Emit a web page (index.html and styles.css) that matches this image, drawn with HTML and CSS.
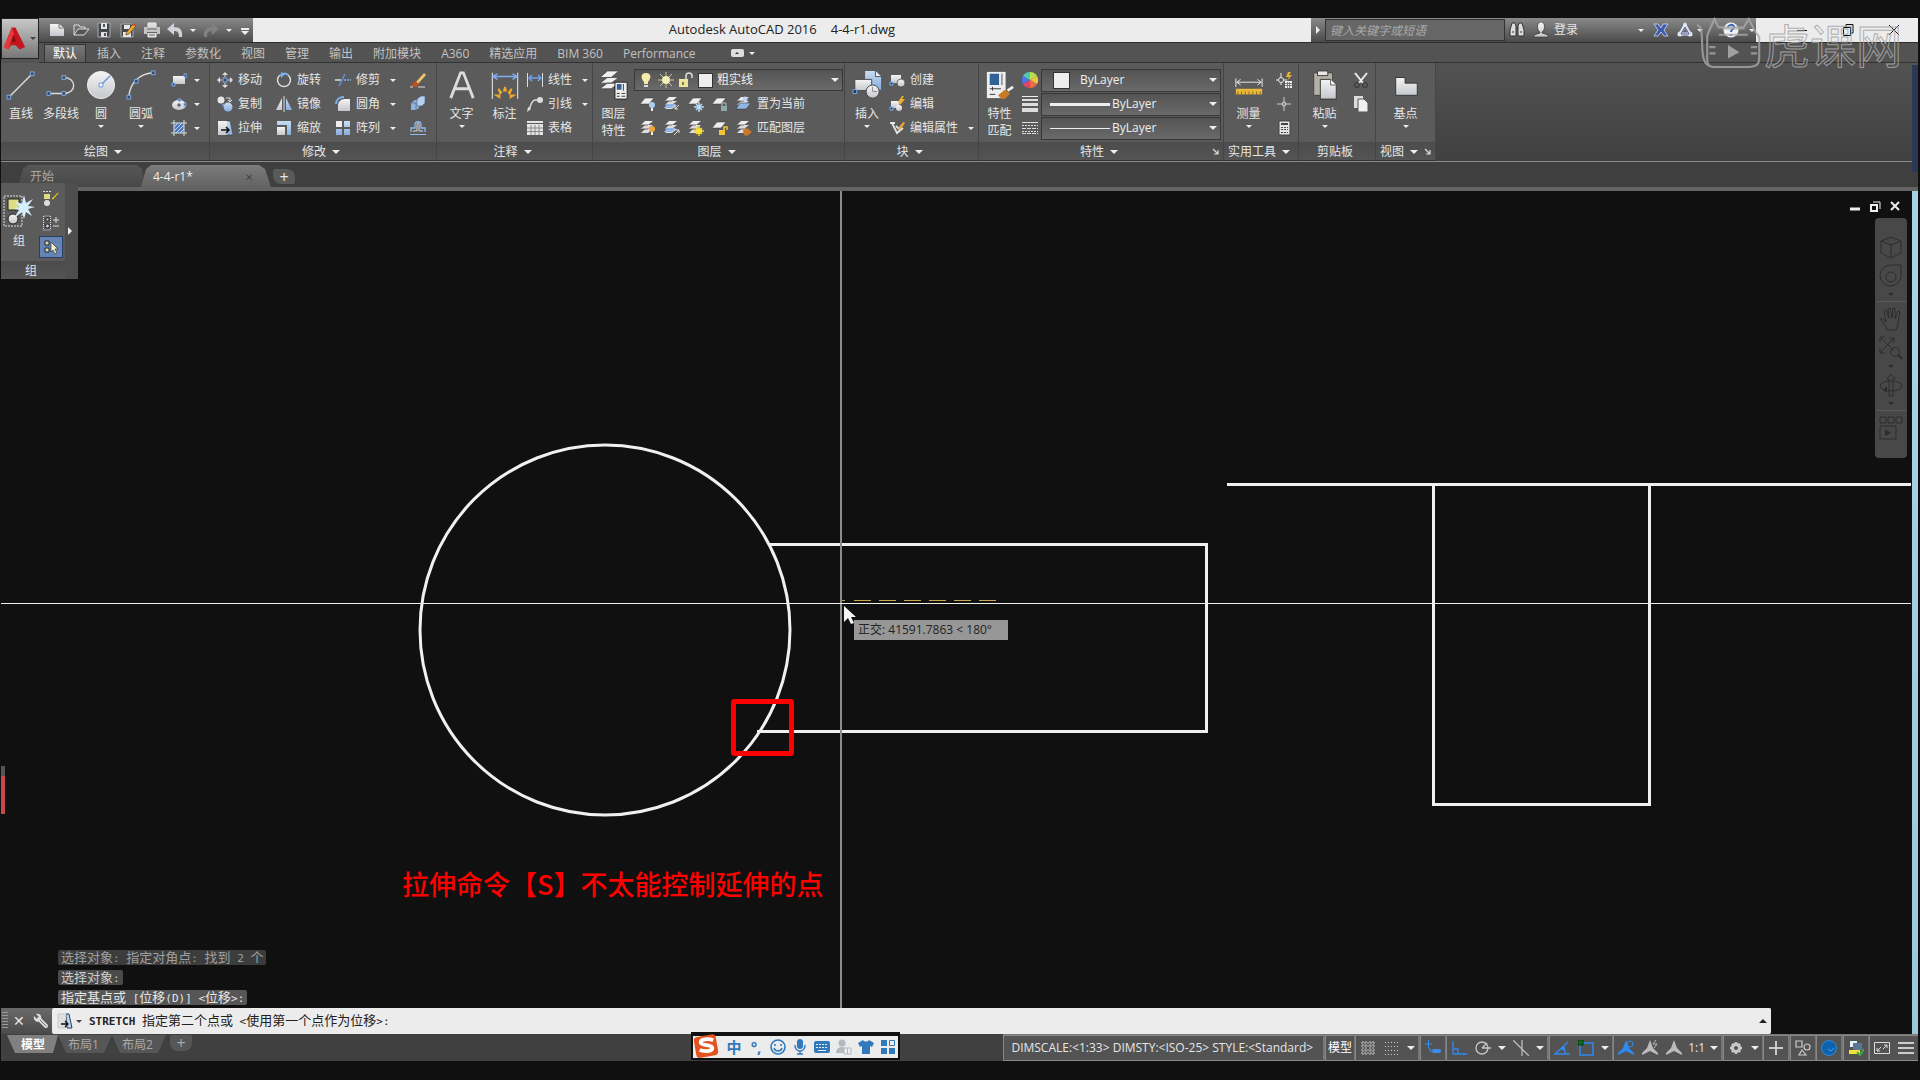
FILE: index.html
```html
<!DOCTYPE html>
<html lang="zh-CN">
<head>
    <meta charset="UTF-8">
    <meta name="viewport" content="width=device-width, initial-scale=1.0">
    <title>Autodesk AutoCAD 2016 4-4-r1.dwg</title>
    <link rel="stylesheet" href="styles.css">
</head>
<body>
    <!-- icon sprite -->
    <svg class="sprite" aria-hidden="true">
        <defs>
            <linearGradient id="metal" x1="0" y1="0" x2="0" y2="1"><stop offset="0" stop-color="#f4f4f4"/><stop offset="1" stop-color="#c4c7cc"/></linearGradient>
            <linearGradient id="sky" x1="0" y1="0" x2="0" y2="1"><stop offset="0" stop-color="#c9dcf2"/><stop offset="1" stop-color="#86aede"/></linearGradient>
        </defs>
        <!-- quick access -->
        <symbol id="i-logo" viewBox="0 0 26 28"><path d="M10 1h4l11 22-6 3-5-5H9l-3 5-5-3z" fill="#c4161c"/><path d="M10 1l3 8-5 10-2 7-5-3z" fill="#e5383b"/><path d="M12 9l3 8H9z" fill="#8a0f13"/></symbol>
        <symbol id="i-new" viewBox="0 0 16 16"><path d="M1 2h9l5 4v8H1z" fill="url(#metal)"/><path d="M10 2v4h5" fill="none" stroke="#777"/></symbol>
        <symbol id="i-open" viewBox="0 0 16 16"><path d="M1 13V3h5l1 2h5v3" fill="none" stroke="#ddd"/><path d="M1 13l4-6h11l-5 6z" fill="#555" stroke="#ddd"/></symbol>
        <symbol id="i-save" viewBox="0 0 16 16"><path d="M2 1h12v14H2z" fill="#44484d" stroke="#aaa"/><path d="M5 1h6v6H5zM5 10h6v5H5z" fill="#dfe2e6"/><path d="M8 2v3M9 11v3" stroke="#555" stroke-width="2"/></symbol>
        <symbol id="i-saveas" viewBox="0 0 16 16"><path d="M1 2h12v13H1z" fill="#44484d" stroke="#aaa"/><path d="M4 3h6v4H4zM3 10h8v5H3z" fill="#e4e6e8"/><path d="M6 11l7-9 3 2-7 8-3 1z" fill="#f0a92e" stroke="#333" stroke-width=".6"/><path d="M13 2l3 2" stroke="#d4462a" stroke-width="2"/></symbol>
        <symbol id="i-print" viewBox="0 0 16 16"><path d="M4 5V1h8v4M4 11v4h8v-4" fill="#ddd" stroke="#eee"/><path d="M0 5h16v7h-3v-2H3v2H0z" fill="#c4c4c4"/><path d="M3 7h10M5 13h6" stroke="#666"/></symbol>
        <symbol id="i-undo" viewBox="0 0 16 16"><path d="M0 7l7-6v4c6 0 9 3 8 10h-3c0-4-1-6-5-6v4z" fill="#cfd2d6"/></symbol>
        <symbol id="i-redo" viewBox="0 0 16 16"><path d="M16 7L9 1v4C3 5 0 8 1 15h3c0-4 1-6 5-6v4z" fill="#808080"/></symbol>
        <symbol id="i-find" viewBox="0 0 16 16"><path d="M3 1h3l1 3v10H1V8zM13 1h-3L9 4v10h6V8z" fill="#ddd" stroke="#333"/><path d="M3 10h2M11 10h2M7 6h2" stroke="#333"/></symbol>
        <symbol id="i-user" viewBox="0 0 16 16"><path d="M8 0c5 0 4 9 1 10v1l6 2v2H1v-2l6-2v-1C4 9 3 0 8 0z" fill="url(#metal)" stroke="#333" stroke-width=".7"/></symbol>
        <symbol id="i-exchange" viewBox="0 0 16 16"><path d="M1 2h4l3 4 2-4h5l-4 6 4 6h-4l-3-4-3 4H1l4-6z" fill="#3e5cae" stroke="#cdd8f4" stroke-width=".8"/></symbol>
        <symbol id="i-a360" viewBox="0 0 16 16"><path d="M8 3l5 9H3z" fill="none" stroke="#dfe5f2" stroke-width="3"/><circle cx="8" cy="3" r="2" fill="#dfe5f2"/><circle cx="3" cy="12" r="2.500" fill="#dfe5f2"/><circle cx="13" cy="12" r="2.500" fill="#dfe5f2"/><path d="M8 5l4 7H4z" fill="none" stroke="#4f608c"/></symbol>
        <symbol id="i-help" viewBox="0 0 16 16"><circle cx="8" cy="8" r="7.500" fill="#f0f3f8"/><path d="M5 6c0-4 6-4 6-1 0 2-3 2-3 5M8 12v2" fill="none" stroke="#3b62b5" stroke-width="2"/></symbol>
        <!-- draw -->
        <symbol id="i-line" viewBox="0 0 32 32"><path d="M3 29L28 4" stroke="#ddd" stroke-width="1.500"/><path d="M1 27h4v4H1zM26 2h4v4h-4z" fill="#3b4b66" stroke="#7fb0f0"/></symbol>
        <symbol id="i-pline" viewBox="0 0 32 32"><path d="M3 25h16c14 0 14-17 0-17" fill="none" stroke="#ddd" stroke-width="1.500"/><path d="M1 23h4v4H1zM17 23h4v4h-4zM17 6h4v4h-4z" fill="#3b4b66" stroke="#7fb0f0"/></symbol>
        <symbol id="i-circle" viewBox="0 0 32 32"><circle cx="16" cy="16" r="14.500" fill="url(#metal)" stroke="#eee"/><path d="M16 16L26 6" stroke="#5e92dc" stroke-width="1.500"/><path d="M14 14h4v4h-4z" fill="#fff" stroke="#5e92dc"/></symbol>
        <symbol id="i-arc" viewBox="0 0 32 32"><path d="M3 29C4 14 14 4 29 3" fill="none" stroke="#ddd" stroke-width="1.500"/><path d="M1 27h4v4H1zM9 10h4v4H9zM27 1h4v4h-4z" fill="#3b4b66" stroke="#7fb0f0"/></symbol>
        <symbol id="i-rect" viewBox="0 0 16 16"><path d="M2 4h12v8H2z" fill="url(#metal)"/><path d="M1 11h3v3H1zM13 2h3v3h-3z" fill="#3b4b66" stroke="#7fb0f0"/></symbol>
        <symbol id="i-ellipse" viewBox="0 0 16 16"><ellipse cx="8" cy="9" rx="7" ry="5" fill="url(#metal)"/><path d="M6 9h4M8 7v4" stroke="#444"/><path d="M7 3h3v2H7zM13 7h2v3h-2z" fill="#3b4b66" stroke="#7fb0f0"/></symbol>
        <symbol id="i-hatch" viewBox="0 0 16 16"><path d="M3 3h10v10H3z" fill="#4c78be"/><path d="M3 7l4-4M3 11l8-8M5 13l8-8M9 13l4-4" stroke="#c6d9f5"/><path d="M3 0v16M13 0v16M0 3h16M0 13h16" stroke="#ddd"/></symbol>
        <!-- modify -->
        <symbol id="i-move" viewBox="0 0 16 16"><path d="M8 0l3 3H5zM8 16l3-3H5zM0 8l3-3v6zM16 8l-3-3v6z" fill="#ddd"/><path d="M8 3v2M8 11v2M3 8h2M11 8h2" stroke="#ddd"/><path d="M6 6h4v4H6z" fill="#3b4b66" stroke="#7fb0f0"/></symbol>
        <symbol id="i-rotate" viewBox="0 0 16 16"><path d="M4 3a6.500 6.500 0 1 0 8 0" fill="none" stroke="#ddd" stroke-width="1.500"/><path d="M4 4c2-3 6-3 8-1" fill="none" stroke="#7fb0f0" stroke-width="2"/><path d="M5 0v6L9 2z" fill="#7fb0f0"/></symbol>
        <symbol id="i-trim" viewBox="0 0 16 16"><path d="M0 8h6" stroke="#ddd" stroke-width="1.500"/><path d="M4 14L10 2" stroke="#5e92dc" stroke-width="1.500"/><path d="M9 8h7" stroke="#7fb0f0" stroke-width="1.500" stroke-dasharray="2 1"/></symbol>
        <symbol id="i-erase" viewBox="0 0 16 16"><path d="M6 10L14 1l2 2-8 9z" fill="#f1c465"/><path d="M5 9l4 3-3 3-5-1z" fill="#c4501e"/><path d="M0 15h3M8 15h7" stroke="#ddd"/></symbol>
        <symbol id="i-copy" viewBox="0 0 16 16"><circle cx="4" cy="4" r="3.500" fill="#e6e6e6"/><circle cx="11" cy="11" r="4.500" fill="url(#sky)"/><circle cx="6" cy="9" r="1" fill="#7fb0f0"/><path d="M9 2h4v3M11 4l2 2 2-2" fill="none" stroke="#ddd"/></symbol>
        <symbol id="i-mirror" viewBox="0 0 16 16"><path d="M6 2v12H0z" fill="url(#metal)"/><path d="M10 2v12h6z" fill="url(#sky)"/><path d="M8 0v16" stroke="#ddd"/></symbol>
        <symbol id="i-fillet" viewBox="0 0 16 16"><path d="M3 15V9c0-3 3-6 7-6h5v12z" fill="url(#metal)"/><path d="M1 8c0-4 3-7 8-7" fill="none" stroke="#7fb0f0" stroke-width="2"/></symbol>
        <symbol id="i-explode" viewBox="0 0 16 16"><path d="M1 7l4-3h4v8l-3 2H1z" fill="#8fb3dc"/><path d="M7 3l4-3h4v7l-3 3H7z" fill="#b6cfec" stroke="#48607f" stroke-width=".6"/><path d="M1 7h5v7" fill="none" stroke="#48607f" stroke-width=".6"/></symbol>
        <symbol id="i-stretch" viewBox="0 0 16 16"><path d="M9 1h4l3 14H9z" fill="url(#sky)" stroke="#333" stroke-width=".5"/><path d="M1 1h9v14H1z" fill="url(#metal)"/><path d="M4 10h7M9 7l3 3-3 3" fill="none" stroke="#111" stroke-width="1.500"/></symbol>
        <symbol id="i-scale" viewBox="0 0 16 16"><path d="M1 1h14v14h-4V5H1z" fill="url(#sky)"/><path d="M1 7h8v8H1z" fill="url(#metal)"/></symbol>
        <symbol id="i-array" viewBox="0 0 16 16"><path d="M1 1h6v6H1z" fill="#eee"/><path d="M9 1h6v6H9zM1 9h6v6H1zM9 9h6v6H9z" fill="url(#sky)"/></symbol>
        <symbol id="i-offset" viewBox="0 0 16 16"><path d="M0 14.500h16" stroke="#8fbaf2"/><path d="M1 12V8h4V4c0-3 6-3 6 0v4h4v4" fill="none" stroke="#8fbaf2" stroke-width="1.300"/><path d="M3 11h4V4c0-1 2-1 2 0v7h4" fill="none" stroke="#ddd"/></symbol>
        <!-- annotate -->
        <symbol id="i-text" viewBox="0 0 32 32"><path d="M4 30L14.500 3h3L28 30M8 20h16" fill="none" stroke="#dcdcdc" stroke-width="3"/></symbol>
        <symbol id="i-dim" viewBox="0 0 32 32"><path d="M2.500 3v28M29.500 3v28" stroke="#ddd" stroke-width="1.200"/><path d="M4 7h24M8 4L3 7l5 3M24 4l5 3-5 3" fill="none" stroke="#7fb0f0" stroke-width="1.500"/><path d="M16 18l1 4h-2zM9 20l3 4-1 1zM23 20l-3 4 1 1zM7 27h3v2zM25 27h-3v2z" stroke="#f0a92e" stroke-width="2" fill="#f0a92e"/></symbol>
        <symbol id="i-linear" viewBox="0 0 16 16"><path d="M.5 1v14M15.500 1v14" stroke="#ddd"/><path d="M2 6h12M5 3L2 6l3 3M11 3l3 3-3 3" fill="none" stroke="#6ea2ec" stroke-width="1.500"/></symbol>
        <symbol id="i-leader" viewBox="0 0 16 16"><path d="M2 14C4 9 4 5 8 4h4" fill="none" stroke="#ddd" stroke-width="1.500"/><circle cx="13" cy="4" r="3" fill="#ddd"/><path d="M0 16l1-5 3 2z" fill="#ddd"/></symbol>
        <symbol id="i-table" viewBox="0 0 16 16"><path d="M0 1h16v14H0z" fill="#e4e4e4"/><path d="M0 3.500h16" stroke="#555"/><path d="M0 8h16M0 11.500h16M4 5v10M8 5v10M12 5v10" stroke="#888"/></symbol>
        <!-- layers -->
        <symbol id="i-layerprops" viewBox="0 0 32 32"><path d="M9 1h12l-8 7H1zM9 8h12l-8 6H1zM9 14h12l-8 6H1z" fill="#efefef" stroke="#444" stroke-width=".8"/><path d="M17 13h13v18H17z" fill="#eee" stroke="#222"/><path d="M19 15h5v6h-5z" fill="#2d5c9c"/><path d="M19 25h3M19 28h3M24 25h4M24 28h4M26 15v7" stroke="#333"/></symbol>
        <symbol id="i-bulb" viewBox="0 0 16 16"><path d="M8 1c6 0 5 6 2 9v2H6v-2C3 7 2 1 8 1z" fill="#f6ebaa"/><path d="M6 13h4v2H6z" fill="#ddd"/></symbol>
        <symbol id="i-sun" viewBox="0 0 16 16"><path d="M8 0v16M0 8h16M2 2l12 12M14 2L2 14" stroke="#c9c5a8"/><circle cx="8" cy="8" r="4" fill="#f5eeb5"/></symbol>
        <symbol id="i-unlock" viewBox="0 0 16 16"><path d="M1 7h9v8H1z" fill="#efe59a"/><path d="M8 7V4c0-4 6-4 6 0v2" fill="none" stroke="#ddd" stroke-width="1.500"/><path d="M5 10v3" stroke="#555" stroke-width="1.500"/></symbol>
        <symbol id="i-sheet" viewBox="0 0 16 16"><path d="M5 2h9L9 8H0z" fill="#eee" stroke="#333" stroke-width=".5"/></symbol>
        <symbol id="i-stack" viewBox="0 0 16 16"><path d="M5 1h8L8 5H1z" fill="#eee"/><path d="M5 5h8L8 9H1z" fill="#ddd"/><path d="M5 9h8l-5 4H1z" fill="#ddd"/><path d="M2 5h6M2 9h6" stroke="#333" stroke-width=".7"/></symbol>
        <symbol id="i-lay1" viewBox="0 0 16 16"><use href="#i-sheet"/><circle cx="12" cy="9" r="3" fill="#a8d0f4"/><path d="M12 12v3" stroke="#eee" stroke-width="2"/></symbol>
        <symbol id="i-lay2" viewBox="0 0 16 16"><use href="#i-stack"/><path d="M3 8h9l-4 4H0z" fill="#8fb6e6"/><path d="M15 9l-4 4v-3M11 13h3" fill="none" stroke="#ddd"/></symbol>
        <symbol id="i-lay3" viewBox="0 0 16 16"><use href="#i-sheet"/><path d="M11 6v10M6 11h10M8 8l6 6M14 8l-6 6" stroke="#b9dcfa" stroke-width="1.500"/></symbol>
        <symbol id="i-lay4" viewBox="0 0 16 16"><use href="#i-sheet"/><path d="M9 10h6v5H9z" fill="#8fa9a9"/><path d="M10 10V7h4v3" fill="none" stroke="#a9c4c4"/></symbol>
        <symbol id="i-lay5" viewBox="0 0 16 16"><use href="#i-stack"/><path d="M4 7h11l-5 6H0z" fill="#8fb6e6" stroke="#333" stroke-width=".5"/><circle cx="9" cy="3" r="2.500" fill="#bcd6f2"/></symbol>
        <symbol id="i-lay6" viewBox="0 0 16 16"><use href="#i-stack"/><circle cx="12" cy="9" r="3" fill="#f5a63a"/><path d="M12 12v3" stroke="#eee" stroke-width="2"/></symbol>
        <symbol id="i-lay7" viewBox="0 0 16 16"><use href="#i-stack"/><path d="M3 8h9l-4 4H0z" fill="#8fb6e6"/><path d="M10 15l5-5M12 10h3v3" fill="none" stroke="#ddd"/></symbol>
        <symbol id="i-lay8" viewBox="0 0 16 16"><use href="#i-stack"/><path d="M11 6v10M6 11h10M8 8l6 6M14 8l-6 6" stroke="#f7d23a" stroke-width="1.500"/><circle cx="11" cy="11" r="3" fill="#f7e13a"/></symbol>
        <symbol id="i-lay9" viewBox="0 0 16 16"><use href="#i-sheet"/><path d="M7 10h6v5H7z" fill="#f1c53a"/><path d="M12 10V7h3v3" fill="none" stroke="#f1c53a" stroke-width="1.500"/></symbol>
        <symbol id="i-lay10" viewBox="0 0 16 16"><use href="#i-stack"/><path d="M7 10l4-2 5 4-5 4-3-1z" fill="#c9772b"/></symbol>
        <!-- block -->
        <symbol id="i-insert" viewBox="0 0 32 32"><path d="M14 1h11l6 6v14H14z" fill="url(#sky)"/><path d="M25 1v6h6" fill="#eef" stroke="#456"/><path d="M3 10h18v12H3z" fill="url(#metal)" stroke="#444"/><circle cx="22" cy="23" r="7" fill="url(#metal)" stroke="#444"/><path d="M22 18v5h5" stroke="#888" fill="none"/><path d="M1 21h4v4H1z" fill="#234" stroke="#7fb0f0"/></symbol>
        <symbol id="i-create" viewBox="0 0 16 16"><path d="M2 3h10v8H2z" fill="url(#metal)"/><circle cx="12" cy="11" r="4" fill="url(#metal)" stroke="#444" stroke-width=".7"/><path d="M1 10h3v3H1z" fill="#345" stroke="#7fb0f0"/></symbol>
        <symbol id="i-bedit" viewBox="0 0 16 16"><path d="M2 5h8v7H2z" fill="url(#metal)"/><circle cx="10" cy="12" r="3" fill="url(#metal)"/><path d="M9 6l4-6h2l-2 3h3l-5 6z" fill="#f0b132"/><path d="M1 11h3v3H1z" fill="#345" stroke="#7fb0f0"/></symbol>
        <symbol id="i-attr" viewBox="0 0 16 16"><path d="M1 3h5M3 3l5 10 6-5M7 6l3 3 3-4" fill="none" stroke="#e4e4e4" stroke-width="1.800"/><path d="M9 9l5-7 2 1-5 7z" fill="#f0a92e"/></symbol>
        <!-- properties -->
        <symbol id="i-match" viewBox="0 0 32 32"><path d="M2 2h20v28H2z" fill="#eceef0"/><path d="M5 4h10v12H5z" fill="#2f6296"/><path d="M18 4v12" stroke="#999" stroke-width="2"/><path d="M5 20h12M8 18v4M5 26h6" stroke="#333"/><path d="M14 27l7-6 6 4-6 6c-3 0-5-1-7-4z" fill="#c97a22"/><path d="M24 22l6-4" stroke="#eee" stroke-width="3"/></symbol>
        <symbol id="i-wheel" viewBox="0 0 16 16"><path d="M8 8V0a8 8 0 0 1 7 4z" fill="#b8e04a"/><path d="M8 8l7-4a8 8 0 0 1 0 8z" fill="#f0c63a"/><path d="M8 8l7 4a8 8 0 0 1-7 4z" fill="#ef6a4a"/><path d="M8 8v8a8 8 0 0 1-7-4z" fill="#e04468"/><path d="M8 8l-7 4a8 8 0 0 1 0-8z" fill="#4a78e0"/><path d="M8 8L1 4a8 8 0 0 1 7-4z" fill="#54c8b0"/></symbol>
        <symbol id="i-weight" viewBox="0 0 16 16"><path d="M0 .5h16" stroke="#eee"/><path d="M0 4h16" stroke="#ddd" stroke-width="2"/><path d="M0 8.500h16" stroke="#ddd" stroke-width="3"/><path d="M0 14h16" stroke="#ddd" stroke-width="4"/></symbol>
        <symbol id="i-dash" viewBox="0 0 16 16"><path d="M0 2.500h16" stroke="#ddd"/><path d="M0 5.500h16M0 11.500h16" stroke="#ddd" stroke-dasharray="2 1"/><path d="M0 8.500h16M0 13.500h16" stroke="#ddd" stroke-dasharray="4 1"/></symbol>
        <!-- utilities, clipboard, view -->
        <symbol id="i-measure" viewBox="0 0 32 32"><path d="M2 9v9M30 9v9M3 13h26M7 10l-4 3 4 3M25 10l4 3-4 3" fill="none" stroke="#eee"/><path d="M2 20h28v6H2z" fill="#e8b83a"/><path d="M4 23v3M8 23v3M12 23v3M16 23v3M20 23v3M24 23v3M28 23v3" stroke="#8a661a"/></symbol>
        <symbol id="i-select" viewBox="0 0 16 16"><path d="M5 1v12M0 8h11" stroke="#eee"/><circle cx="5" cy="8" r="2.500" fill="#555" stroke="#eee"/><path d="M12 0l-2 5h3l-2 4 5-6h-3l2-3z" fill="#f0b132"/><path d="M9 9h7v7H9z" fill="#eee"/><path d="M9 11.500h7M9 13.500h7M11.500 10v6M13.500 10v6" stroke="#555" stroke-width=".7"/></symbol>
        <symbol id="i-point" viewBox="0 0 16 16"><path d="M8 1v14M1 8h14" stroke="#ccc"/><circle cx="8" cy="8" r="2" fill="#888" stroke="#ccc"/></symbol>
        <symbol id="i-calc" viewBox="0 0 16 16"><path d="M3 1h11v14H3z" fill="#e4e4e4" stroke="#444"/><path d="M5 3h7v2H5zM5 7h2v1H5zM8 7h2v1H8zM11 7h1v1h-1zM5 9h2v1H5zM8 9h2v1H8zM11 9h1v1h-1zM5 12h2v1H5zM8 12h2v1H8zM11 12h1v1h-1z" fill="#444"/></symbol>
        <symbol id="i-paste" viewBox="0 0 32 32"><path d="M4 3h20v24H4z" fill="#b5b1a4" stroke="#444"/><path d="M8 1h11v5H8z" fill="#e8e8e8" stroke="#333"/><path d="M11 10h11l6 6v15H11z" fill="url(#metal)" stroke="#333"/><path d="M22 10v6h6" fill="#fff" stroke="#555"/></symbol>
        <symbol id="i-cut" viewBox="0 0 16 16"><path d="M2 1l8 10M14 1L6 11" stroke="#eee" stroke-width="2"/><circle cx="4" cy="13" r="2.500" fill="none" stroke="#333"/><circle cx="12" cy="13" r="2.500" fill="none" stroke="#333"/></symbol>
        <symbol id="i-clip" viewBox="0 0 16 16"><path d="M1 0h9v12H1z" fill="#ddd"/><path d="M5 3h6l4 4v9H5z" fill="#f0f0f0" stroke="#555"/></symbol>
        <symbol id="i-base" viewBox="0 0 32 32"><path d="M5 8h10v6h13v13H5z" fill="url(#metal)" stroke="#333"/></symbol>
        <symbol id="i-launch" viewBox="0 0 8 8"><path d="M1 1l5 5M6 2v4H2" fill="none" stroke="#ddd" stroke-width="1.200"/></symbol>
        <!-- group palette -->
        <symbol id="i-group" viewBox="0 0 32 32"><path d="M1 1h18v30H1z" fill="none" stroke="#ddd" stroke-dasharray="2 1"/><path d="M5 4h11v11H5z" fill="#dfdc82" stroke="#222"/><circle cx="10" cy="24" r="5" fill="url(#metal)" stroke="#222"/><path d="M21 0l2 8 7-4-5 7 7 1-7 2 4 7-6-4-2 7-2-7-8 6 5-8-6-2 6-1-4-6 7 3z" fill="#d5effc"/></symbol>
        <symbol id="i-ungroup" viewBox="0 0 16 16"><path d="M1 3h6v5H1z" fill="#dfdc82"/><circle cx="4" cy="12" r="3" fill="#ddd"/><path d="M0 .5h8" stroke="#ddd" stroke-dasharray="2 1"/><path d="M8 8l7-7 1 1-6 7z" fill="#d9c234" stroke="#333" stroke-width=".4"/></symbol>
        <symbol id="i-gedit" viewBox="0 0 16 16"><path d="M.5 1v14h7V1z" fill="none" stroke="#ddd" stroke-dasharray="1 1"/><path d="M3 3h3v3H3z" fill="#ddd" stroke="#222"/><circle cx="4.500" cy="11" r="2" fill="#b9d6f8" stroke="#222"/><path d="M10 5h6M13 2v6M10 11h6" stroke="#ddd"/></symbol>
        <symbol id="i-gsel" viewBox="0 0 16 16"><path d="M2 2h4v4H2zM2 9h4v4H2z" fill="#dfdc9a" stroke="#223"/><path d="M8 3v10l2-2 2 4 2-1-2-4h3z" fill="#f2efb8" stroke="#223" stroke-width=".6"/></symbol>
        <!-- navigation bar -->
        <symbol id="i-cube" viewBox="0 0 24 24"><path d="M2 6l10-4 10 4v12l-10 5-10-5zM2 6l10 4 10-4M12 10v13" fill="none" stroke="#2c2c2c"/></symbol>
        <symbol id="i-steer" viewBox="0 0 24 24"><path d="M12 1h10v11a10.500 10.500 0 1 1-10-11z" fill="none" stroke="#2c2c2c"/><circle cx="12" cy="13" r="5" fill="none" stroke="#2c2c2c"/></symbol>
        <symbol id="i-pan" viewBox="0 0 24 24"><path d="M8 23c0-4-5-8-7-11 2-1 3 0 6 3L5 4l2-1 3 8-1-9 2-1 2 10 1-10h2l0 11 3-8 2 1c-2 6-1 13-4 18z" fill="none" stroke="#2c2c2c"/></symbol>
        <symbol id="i-zoom" viewBox="0 0 24 24"><path d="M1 17L15 2M10 2h5v5M1 1l14 14M1 6V1h5M1 12v5h5" fill="none" stroke="#2c2c2c"/><circle cx="16" cy="16" r="4.500" fill="none" stroke="#2c2c2c"/><path d="M19 19l4 4" stroke="#2c2c2c" stroke-width="2"/></symbol>
        <symbol id="i-orbit" viewBox="0 0 24 24"><path d="M10 23V6H8l4-5 4 5h-2v17z" fill="none" stroke="#2c2c2c"/><ellipse cx="12" cy="13" rx="11" ry="5" fill="none" stroke="#2c2c2c"/><path d="M8 13v7l-4-3z" fill="#2c2c2c"/></symbol>
        <symbol id="i-motion" viewBox="0 0 24 24"><path d="M1 1h6v6H1zM9 1h6v6H9zM17 1h6v6h-6zM1 10h16v13H1z" fill="none" stroke="#2c2c2c"/><path d="M6 13v7l6-3z" fill="#2c2c2c"/></symbol>
        <!-- command line -->
        <symbol id="i-wrench" viewBox="0 0 16 16"><path d="M6 6l7 7" stroke="#ddd" stroke-width="4" stroke-linecap="round"/><path d="M6 6l7 7" stroke="#666" stroke-linecap="round"/><path d="M1 3l3 3 2-2-3-3c4-1 6 2 5 5L5 9C2 9 0 6 1 3z" fill="#ddd"/></symbol>
        <symbol id="i-cmd" viewBox="0 0 16 16"><path d="M9 1h3l3 14h-5z" fill="#b7d3f2" stroke="#2c3d52"/><path d="M1 1h8v14H1z" fill="#dcdfe2" stroke="#bbb" stroke-width=".6"/><path d="M4 11h6M8 8l3 3-3 3" fill="none" stroke="#111" stroke-width="1.300"/></symbol>
        <!-- status bar -->
        <symbol id="s-grid" viewBox="0 0 16 16"><path d="M3 1v14M6 1v14M10 1v14M13 1v14M1 3h14M1 6h14M1 10h14M1 13h14" stroke="#c4c4c4" stroke-dasharray="2 1"/></symbol>
        <symbol id="s-snap" viewBox="0 0 16 16"><path d="M1 2.500h14M1 6.500h14M1 10.500h14M1 14.500h14" stroke="#ccc" stroke-dasharray="1 2"/></symbol>
        <symbol id="s-infer" viewBox="0 0 16 16"><path d="M0 4h7M3.500 0v8M5 8v3h3" fill="none" stroke="#3b8ee8"/><rect x="7" y="9" width="9" height="4" rx="2" fill="#3b8ee8"/></symbol>
        <symbol id="s-ortho" viewBox="0 0 16 16"><path d="M2 1v13h14M2 9h5v5" fill="none" stroke="#2f8af0" stroke-width="1.300"/></symbol>
        <symbol id="s-polar" viewBox="0 0 16 16"><circle cx="7" cy="8" r="6" fill="none" stroke="#c6c6c6" stroke-width="1.300"/><path d="M7 8h9M7 8l5-5" stroke="#c6c6c6" stroke-width="1.300"/></symbol>
        <symbol id="s-iso" viewBox="0 0 16 16"><path d="M0 0l16 16M9 0v16" stroke="#bbb" stroke-width="1.300"/></symbol>
        <symbol id="s-track" viewBox="0 0 16 16"><path d="M14 2L1 14h15M9 7l3 7" fill="none" stroke="#2f8af0" stroke-width="1.300"/><path d="M7 7h4v3H7z" fill="#2f8af0"/></symbol>
        <symbol id="s-osnap" viewBox="0 0 16 16"><path d="M2 3h13v12H2z" fill="none" stroke="#2f8af0" stroke-width="1.500"/><path d="M0 0h5v5H0z" fill="#0c6b1c" stroke="#043a0c"/></symbol>
        <symbol id="s-person" viewBox="0 0 16 16"><path d="M8 0l3 8 5 5v2l-8-4-8 4v-2l5-5z" fill="currentColor"/></symbol>
        <symbol id="s-ann" viewBox="0 0 16 16"><use href="#s-person"/><circle cx="12" cy="4" r="3" fill="none" stroke="currentColor"/></symbol>
        <symbol id="s-auto" viewBox="0 0 16 16"><use href="#s-person"/><path d="M14 0l-3 4h4l-3 4" fill="none" stroke="currentColor"/></symbol>
        <symbol id="s-gear" viewBox="0 0 16 16"><circle cx="8" cy="8" r="3.500" fill="none" stroke="#c8c8c8" stroke-width="3"/><path d="M8 2v3M8 11v3M2 8h3M11 8h3M4 4l2 2M10 10l2 2M12 4l-2 2M6 10l-2 2" stroke="#c8c8c8" stroke-width="2.500"/></symbol>
        <symbol id="s-plus" viewBox="0 0 16 16"><path d="M8 1v14M1 8h14" stroke="#ccc" stroke-width="2"/></symbol>
        <symbol id="s-shapes" viewBox="0 0 16 16"><path d="M1 1h6v6H1zM7 10l4 5H4z" fill="none" stroke="#ccc" stroke-width="1.200"/><circle cx="12" cy="7" r="3" fill="none" stroke="#ccc" stroke-width="1.200"/></symbol>
        <symbol id="s-hw" viewBox="0 0 16 16"><circle cx="8" cy="8" r="7.500" fill="#0f62ae" stroke="#2f86d8"/><path d="M7 9l3 2 3-3" fill="none" stroke="#4aa0ee"/></symbol>
        <symbol id="s-clean" viewBox="0 0 16 16"><path d="M2 1h7v6H2z" fill="#e8f2fa"/><path d="M5 3h9v7H5z" fill="#5a7894"/><path d="M1 10h11v4H1z" fill="#f0e23a"/><path d="M9 12l3 3 4-6" fill="none" stroke="#3fae3a" stroke-width="2"/></symbol>
        <symbol id="s-full" viewBox="0 0 16 16"><path d="M.5 2.500h15v11H.5z" fill="none" stroke="#ddd"/><path d="M3 11l4-4M3 8v3h3M13 5L9 9M10 5h3v3" fill="none" stroke="#ddd"/></symbol>
        <symbol id="s-menu" viewBox="0 0 16 16"><path d="M0 3h16M0 8h16M0 13h16" stroke="#ccc" stroke-width="2"/></symbol>
        <!-- input method bar -->
        <symbol id="m-logo" viewBox="0 0 28 26"><rect x="2" y="2" width="23" height="22" rx="4" fill="#e2531f" transform="rotate(-10 14 13)"/><path d="M21 7c-5-2-13-1-13 2 0 4 12 2 12 6 0 4-9 4-13 2" fill="none" stroke="#fff" stroke-width="4"/></symbol>
        <symbol id="m-smile" viewBox="0 0 16 16"><circle cx="8" cy="8" r="7" fill="none" stroke="#3079bd" stroke-width="1.600"/><path d="M5 5v2M11 5v2M4 9c1 4 7 4 8 0" fill="none" stroke="#3079bd" stroke-width="1.500"/></symbol>
        <symbol id="m-mic" viewBox="0 0 16 16"><rect x="5" y="0" width="6" height="10" rx="3" fill="#3079bd"/><path d="M3 6c0 8 10 8 10 0M8 12v3M5 15h6" fill="none" stroke="#3079bd" stroke-width="1.500"/></symbol>
        <symbol id="m-keys" viewBox="0 0 16 16"><rect y="2" width="16" height="12" rx="2" fill="#3079bd"/><path d="M2 5.500h12M2 8.500h12" stroke="#eee" stroke-dasharray="2 1"/><path d="M4 11.500h8" stroke="#eee"/></symbol>
        <symbol id="m-user" viewBox="0 0 16 16"><circle cx="6" cy="4" r="3.500" fill="#b4b8bf"/><path d="M0 14c0-7 9-7 10-4v4z" fill="#b4b8bf"/><path d="M8 9h7v6H8z" fill="#ececec" stroke="#b4b8bf"/><path d="M11.500 9v6" stroke="#b4b8bf"/></symbol>
        <symbol id="m-shirt" viewBox="0 0 16 16"><path d="M5 1c1 2 5 2 6 0l5 3-2 4-2-1v8H4V7L2 8 0 4z" fill="#3079bd"/></symbol>
        <symbol id="m-apps" viewBox="0 0 16 16"><path d="M1 1h6v6H1zM1 9h6v6H1zM9 9h6v6H9z" fill="#3079bd"/><path d="M9.500 1.500h5v5h-5z" fill="none" stroke="#3079bd"/></symbol>
    </svg>

    <div class="app">
        <header class="header">
            <button class="app-button" aria-label="应用程序菜单"><svg class="logo"><use href="#i-logo"/></svg><i class="caret caret-dark"></i></button>
            <div class="titlebar">
                <div class="quick-access">
                    <button aria-label="新建"><svg><use href="#i-new"/></svg></button>
                    <button aria-label="打开"><svg><use href="#i-open"/></svg></button>
                    <button aria-label="保存"><svg><use href="#i-save"/></svg></button>
                    <button aria-label="另存为"><svg><use href="#i-saveas"/></svg></button>
                    <button aria-label="打印"><svg><use href="#i-print"/></svg></button>
                    <button aria-label="放弃"><svg><use href="#i-undo"/></svg></button>
                    <i class="caret"></i>
                    <button aria-label="重做"><svg><use href="#i-redo"/></svg></button>
                    <i class="caret"></i>
                    <button class="customize" aria-label="自定义"><i class="caret caret-big"></i></button>
                </div>
                <h1 class="window-title"><span>Autodesk AutoCAD 2016</span><span>4-4-r1.dwg</span></h1>
                <div class="info-center">
                    <button class="info-toggle" aria-label="收起"><i class="caret-right"></i></button>
                    <input type="text" class="search" placeholder="键入关键字或短语" aria-label="搜索">
                    <button aria-label="搜索"><svg><use href="#i-find"/></svg></button>
                    <button class="login"><svg><use href="#i-user"/></svg>登录<i class="caret"></i></button>
                    <button aria-label="Exchange"><svg><use href="#i-exchange"/></svg></button>
                    <button aria-label="A360"><svg><use href="#i-a360"/></svg></button>
                    <i class="caret"></i>
                    <button class="help" aria-label="帮助"><svg><use href="#i-help"/></svg></button>
                    <i class="caret"></i>
                </div>
                <div class="window-buttons">
                    <button aria-label="最小化"><svg viewBox="0 0 12 12"><path d="M1 6.500h10" stroke="#111"/></svg></button>
                    <button aria-label="还原"><svg viewBox="0 0 12 12"><path d="M1.500 3.500h7v8h-7zM4 3V.5h7V9H9" fill="none" stroke="#111"/></svg></button>
                    <button aria-label="关闭"><svg viewBox="0 0 12 12"><path d="M1 1l10 10M11 1L1 11" stroke="#111"/></svg></button>
                </div>
            </div>
            <nav class="ribbon-tabs">
                <a href="#" class="active">默认</a>
                <a href="#">插入</a>
                <a href="#">注释</a>
                <a href="#">参数化</a>
                <a href="#">视图</a>
                <a href="#">管理</a>
                <a href="#">输出</a>
                <a href="#">附加模块</a>
                <a href="#">A360</a>
                <a href="#">精选应用</a>
                <a href="#">BIM 360</a>
                <a href="#">Performance</a>
                <button class="ribbon-min" aria-label="最小化功能区"><i class="min-box"></i><i class="caret"></i></button>
            </nav>
        </header>

        <section class="ribbon">
            <div class="panel panel-draw">
                <div class="panel-body">
                    <button class="big"><svg><use href="#i-line"/></svg>直线</button>
                    <button class="big"><svg><use href="#i-pline"/></svg>多段线</button>
                    <button class="big"><svg><use href="#i-circle"/></svg>圆<i class="caret"></i></button>
                    <button class="big"><svg><use href="#i-arc"/></svg>圆弧<i class="caret"></i></button>
                    <div class="small-col">
                        <button class="small" aria-label="矩形"><svg><use href="#i-rect"/></svg><i class="caret"></i></button>
                        <button class="small" aria-label="椭圆"><svg><use href="#i-ellipse"/></svg><i class="caret"></i></button>
                        <button class="small" aria-label="图案填充"><svg><use href="#i-hatch"/></svg><i class="caret"></i></button>
                    </div>
                </div>
                <div class="panel-title">绘图<i class="caret caret-big"></i></div>
            </div>

            <div class="panel panel-modify">
                <div class="panel-body modify-grid">
                    <button class="small"><svg><use href="#i-move"/></svg>移动</button>
                    <button class="small"><svg><use href="#i-rotate"/></svg>旋转</button>
                    <button class="small"><svg><use href="#i-trim"/></svg>修剪<i class="caret"></i></button>
                    <button class="small" aria-label="删除"><svg><use href="#i-erase"/></svg></button>
                    <button class="small"><svg><use href="#i-copy"/></svg>复制</button>
                    <button class="small"><svg><use href="#i-mirror"/></svg>镜像</button>
                    <button class="small"><svg><use href="#i-fillet"/></svg>圆角<i class="caret"></i></button>
                    <button class="small" aria-label="分解"><svg><use href="#i-explode"/></svg></button>
                    <button class="small"><svg><use href="#i-stretch"/></svg>拉伸</button>
                    <button class="small"><svg><use href="#i-scale"/></svg>缩放</button>
                    <button class="small"><svg><use href="#i-array"/></svg>阵列<i class="caret"></i></button>
                    <button class="small" aria-label="偏移"><svg><use href="#i-offset"/></svg></button>
                </div>
                <div class="panel-title">修改<i class="caret caret-big"></i></div>
            </div>

            <div class="panel panel-annotate">
                <div class="panel-body">
                    <button class="big"><svg><use href="#i-text"/></svg>文字<i class="caret"></i></button>
                    <button class="big"><svg><use href="#i-dim"/></svg>标注</button>
                    <div class="small-col">
                        <button class="small"><svg><use href="#i-linear"/></svg>线性<i class="caret"></i></button>
                        <button class="small"><svg><use href="#i-leader"/></svg>引线<i class="caret"></i></button>
                        <button class="small"><svg><use href="#i-table"/></svg>表格</button>
                    </div>
                </div>
                <div class="panel-title">注释<i class="caret caret-big"></i></div>
            </div>

            <div class="panel panel-layers">
                <div class="panel-body">
                    <button class="big"><svg><use href="#i-layerprops"/></svg>图层<br>特性</button>
                    <div class="layer-tools">
                        <div class="combo layer-combo">
                            <svg><use href="#i-bulb"/></svg><svg><use href="#i-sun"/></svg><svg><use href="#i-unlock"/></svg>
                            <i class="swatch"></i>
                            <select aria-label="图层"><option>粗实线</option></select>
                            <i class="caret caret-big"></i>
                        </div>
                        <div class="layer-row">
                            <button class="small" aria-label="关"><svg><use href="#i-lay1"/></svg></button>
                            <button class="small" aria-label="隔离"><svg><use href="#i-lay2"/></svg></button>
                            <button class="small" aria-label="冻结"><svg><use href="#i-lay3"/></svg></button>
                            <button class="small" aria-label="锁定"><svg><use href="#i-lay4"/></svg></button>
                            <button class="small"><svg><use href="#i-lay5"/></svg>置为当前</button>
                        </div>
                        <div class="layer-row">
                            <button class="small" aria-label="打开所有图层"><svg><use href="#i-lay6"/></svg></button>
                            <button class="small" aria-label="取消隔离"><svg><use href="#i-lay7"/></svg></button>
                            <button class="small" aria-label="解冻"><svg><use href="#i-lay8"/></svg></button>
                            <button class="small" aria-label="解锁"><svg><use href="#i-lay9"/></svg></button>
                            <button class="small"><svg><use href="#i-lay10"/></svg>匹配图层</button>
                        </div>
                    </div>
                </div>
                <div class="panel-title">图层<i class="caret caret-big"></i></div>
            </div>

            <div class="panel panel-block">
                <div class="panel-body">
                    <button class="big"><svg><use href="#i-insert"/></svg>插入<i class="caret"></i></button>
                    <div class="small-col">
                        <button class="small"><svg><use href="#i-create"/></svg>创建</button>
                        <button class="small"><svg><use href="#i-bedit"/></svg>编辑</button>
                        <button class="small"><svg><use href="#i-attr"/></svg>编辑属性<i class="caret"></i></button>
                    </div>
                </div>
                <div class="panel-title">块<i class="caret caret-big"></i></div>
            </div>

            <div class="panel panel-props">
                <div class="panel-body">
                    <button class="big"><svg><use href="#i-match"/></svg>特性<br>匹配</button>
                    <div class="prop-rows">
                        <svg><use href="#i-wheel"/></svg>
                        <div class="combo"><i class="swatch"></i><select class="color-select" aria-label="颜色"><option>ByLayer</option></select><i class="caret caret-big"></i></div>
                        <svg><use href="#i-weight"/></svg>
                        <div class="combo"><i class="sample thick"></i><select aria-label="线宽"><option>ByLayer</option></select><i class="caret caret-big"></i></div>
                        <svg><use href="#i-dash"/></svg>
                        <div class="combo"><i class="sample"></i><select aria-label="线型"><option>ByLayer</option></select><i class="caret caret-big"></i></div>
                    </div>
                </div>
                <div class="panel-title">特性<i class="caret caret-big"></i><svg class="launch"><use href="#i-launch"/></svg></div>
            </div>

            <div class="panel panel-utils">
                <div class="panel-body">
                    <button class="big"><svg><use href="#i-measure"/></svg>测量<i class="caret"></i></button>
                    <div class="small-col">
                        <button class="small" aria-label="快速选择"><svg><use href="#i-select"/></svg></button>
                        <button class="small" aria-label="点坐标"><svg><use href="#i-point"/></svg></button>
                        <button class="small" aria-label="计算器"><svg><use href="#i-calc"/></svg></button>
                    </div>
                </div>
                <div class="panel-title">实用工具<i class="caret caret-big"></i></div>
            </div>

            <div class="panel panel-clip">
                <div class="panel-body">
                    <button class="big"><svg><use href="#i-paste"/></svg>粘贴<i class="caret"></i></button>
                    <div class="small-col">
                        <button class="small" aria-label="剪切"><svg><use href="#i-cut"/></svg></button>
                        <button class="small" aria-label="复制"><svg><use href="#i-clip"/></svg></button>
                    </div>
                </div>
                <div class="panel-title">剪贴板</div>
            </div>

            <div class="panel panel-view">
                <div class="panel-body">
                    <button class="big"><svg><use href="#i-base"/></svg>基点<i class="caret"></i></button>
                </div>
                <div class="panel-title">视图<i class="caret caret-big"></i><svg class="launch"><use href="#i-launch"/></svg></div>
            </div>
        </section>

        <nav class="doc-tabs">
            <a href="#" class="doc-tab">开始</a>
            <a href="#" class="doc-tab current">4-4-r1*<span class="close">✕</span></a>
            <button class="doc-add" aria-label="新图形">+</button>
        </nav>

        <main class="canvas">
            <svg class="drawing" viewBox="1 191 1910 843" preserveAspectRatio="xMinYMin slice">
                <g fill="none" stroke="#f0f0f0" stroke-width="3">
                    <circle cx="605" cy="630" r="185"/>
                    <path d="M769 544.500H1206.500V731.500H757"/>
                    <path d="M1227 484.500H1911M1433.500 484.500V804.500H1649.500V484.500"/>
                </g>
                <path d="M841 191V1034" stroke="#8c8c8c" stroke-width="2"/>
                <path d="M1 603.500H1911" stroke="#eef0e6"/>
                <path d="M842 600.500h3M854 600.500H996" stroke="#c9a94e" stroke-dasharray="17 8"/>
                <rect x="733.500" y="701.500" width="58" height="52" rx="1" fill="none" stroke="#f00" stroke-width="5"/>
                <path d="M844 606v16l4-4 3 6 3-1-3-6h5z" fill="#f4f4f4"/>
                <path d="M3 766v10" stroke="#555" stroke-width="4"/>
                <path d="M3 776v38" stroke="#c84848" stroke-width="4"/>
            </svg>
            <div class="tooltip">正交: 41591.7863 &lt; 180°</div>
            <p class="caption">拉伸命令【S】不太能控制延伸的点</p>

            <div class="mdi-buttons">
                <button aria-label="最小化"><svg viewBox="0 0 12 12"><path d="M1 9h10" stroke="#eee" stroke-width="3"/></svg></button>
                <button aria-label="还原"><svg viewBox="0 0 12 12"><path d="M2 5h6v6H2z" fill="none" stroke="#eee" stroke-width="2"/><path d="M4 2h7v7" fill="none" stroke="#eee"/></svg></button>
                <button aria-label="关闭"><svg viewBox="0 0 12 12"><path d="M2 2l8 8M10 2l-8 8" stroke="#eee" stroke-width="2"/></svg></button>
            </div>
            <div class="nav-bar">
                <button aria-label="视图立方"><svg><use href="#i-cube"/></svg></button>
                <button aria-label="控制盘"><svg><use href="#i-steer"/></svg></button>
                <i class="caret"></i>
                <hr>
                <button aria-label="平移"><svg><use href="#i-pan"/></svg></button>
                <button aria-label="缩放"><svg><use href="#i-zoom"/></svg></button>
                <i class="caret"></i>
                <button aria-label="动态观察"><svg><use href="#i-orbit"/></svg></button>
                <i class="caret"></i>
                <hr>
                <button aria-label="ShowMotion"><svg><use href="#i-motion"/></svg></button>
            </div>

            <div class="command">
                <ul class="history">
                    <li class="old">选择对象<code>: </code>指定对角点<code>: </code>找到<code> 2 </code>个</li>
                    <li class="mid">选择对象<code>:</code></li>
                    <li>指定基点或<code> [</code>位移<code>(D)] &lt;</code>位移<code>&gt;:</code></li>
                </ul>
                <div class="command-line">
                    <i class="grip"></i>
                    <button class="cmd-close" aria-label="关闭">✕</button>
                    <button class="cmd-tool" aria-label="自定义"><svg><use href="#i-wrench"/></svg></button>
                    <div class="prompt">
                        <svg><use href="#i-cmd"/></svg><i class="caret caret-dark"></i>
                        <span><code><b>STRETCH</b> </code>指定第二个点或<code> &lt;</code>使用第一个点作为位移<code>&gt;:</code></span>
                        <button class="cmd-up" aria-label="历史记录"></button>
                    </div>
                </div>
            </div>
        </main>

        <footer class="status">
            <nav class="layout-tabs">
                <a href="#" class="current">模型</a>
                <a href="#">布局1</a>
                <a href="#">布局2</a>
                <button aria-label="新建布局">+</button>
            </nav>
            <div class="status-tools">
                <div class="cell vars">DIMSCALE:&lt;1:33&gt; DIMSTY:&lt;ISO-25&gt; STYLE:&lt;Standard&gt;</div>
                <div class="cell"><button class="model">模型</button></div>
                <div class="cell">
                    <button aria-label="栅格"><svg><use href="#s-grid"/></svg></button>
                    <button aria-label="捕捉"><svg><use href="#s-snap"/></svg></button>
                    <i class="caret caret-big"></i>
                </div>
                <div class="cell"><button aria-label="推断约束"><svg><use href="#s-infer"/></svg></button></div>
                <div class="cell">
                    <button aria-label="正交"><svg><use href="#s-ortho"/></svg></button>
                    <button aria-label="极轴"><svg><use href="#s-polar"/></svg></button>
                    <i class="caret caret-big"></i>
                    <button aria-label="等轴测"><svg><use href="#s-iso"/></svg></button>
                    <i class="caret caret-big"></i>
                </div>
                <div class="cell">
                    <button aria-label="对象捕捉追踪"><svg><use href="#s-track"/></svg></button>
                    <button aria-label="对象捕捉"><svg><use href="#s-osnap"/></svg></button>
                    <i class="caret caret-big"></i>
                </div>
                <div class="cell">
                    <button class="on" aria-label="注释可见性"><svg><use href="#s-ann"/></svg></button>
                    <button aria-label="自动缩放"><svg><use href="#s-auto"/></svg></button>
                    <button aria-label="注释比例"><svg><use href="#s-person"/></svg></button>
                    <span class="scale">1:1</span>
                    <i class="caret caret-big"></i>
                </div>
                <div class="cell"><button aria-label="切换工作空间"><svg><use href="#s-gear"/></svg></button><i class="caret caret-big"></i></div>
                <div class="cell"><button aria-label="注释监视器"><svg><use href="#s-plus"/></svg></button></div>
                <div class="cell"><button aria-label="隔离对象"><svg><use href="#s-shapes"/></svg></button></div>
                <div class="cell"><button aria-label="硬件加速"><svg><use href="#s-hw"/></svg></button></div>
                <div class="cell"><button aria-label="图形状态"><svg><use href="#s-clean"/></svg></button></div>
                <div class="cell"><button aria-label="全屏"><svg><use href="#s-full"/></svg></button><button aria-label="自定义"><svg><use href="#s-menu"/></svg></button></div>
            </div>
            <div class="ime">
                <svg class="ime-logo"><use href="#m-logo"/></svg>
                <b>中</b>
                <b>°,</b>
                <svg><use href="#m-smile"/></svg>
                <svg><use href="#m-mic"/></svg>
                <svg><use href="#m-keys"/></svg>
                <svg><use href="#m-user"/></svg>
                <svg><use href="#m-shirt"/></svg>
                <svg><use href="#m-apps"/></svg>
            </div>
        </footer>

        <aside class="palette">
            <div class="palette-main">
                <div class="palette-body">
                    <button class="big"><svg><use href="#i-group"/></svg>组</button>
                    <div class="small-col">
                        <button class="small" aria-label="解除编组"><svg><use href="#i-ungroup"/></svg></button>
                        <button class="small" aria-label="组编辑"><svg><use href="#i-gedit"/></svg></button>
                        <button class="small pressed" aria-label="启用组选择"><svg><use href="#i-gsel"/></svg></button>
                    </div>
                </div>
                <div class="panel-title">组</div>
            </div>
            <div class="palette-side"><i class="caret-right"></i></div>
        </aside>

        <div class="desktop-edge"></div>

        <div class="watermark">
            <svg viewBox="0 0 64 50"><path d="M2 8c8 0 3 24 7 33 1 4 4 6 8 7h36c6 0 9-3 9-8V19l-4-5-6-12-5 8H23l-4-8-5 11-2 5v23c0 4 2 7 6 7M26 11h22M23 17h28M14 29h6M14 35h6M54 29h6M54 35h6" fill="none" stroke="#a8a8a8" stroke-opacity=".8" stroke-width="2"/><path d="M32 27v13l11-6z" fill="#a0a0a0"/></svg>
            <span>虎课网</span>
        </div>
    </div>
</body>
</html>
```

FILE: styles.css
```css
* {
    box-sizing: border-box;
}
body {
    margin: 0;
    background: #101010;
    color: #e6e6e6;
    font-family: "Open Sans", "Noto Sans CJK SC", sans-serif;
    font-size: 12px;
    line-height: 18px;
    white-space: nowrap;
    overflow: hidden;
}
button {
    margin: 0;
    padding: 0;
    border: 0;
    background: none;
    color: inherit;
    font: inherit;
    cursor: pointer;
}
a {
    color: inherit;
    text-decoration: none;
}
svg {
    width: 16px;
    height: 16px;
    flex: none;
}
.sprite {
    position: absolute;
    width: 0;
    height: 0;
}
.app {
    position: relative;
    display: flex;
    flex-direction: column;
    height: 100vh;
    padding: 18px 2px 19px 1px;
}

/* arrows */
.caret {
    flex: none;
    width: 0;
    height: 0;
    border: 3px solid transparent;
    border-top-color: #eee;
    border-bottom: 0;
}
.caret-big {
    border-width: 4px;
    border-bottom: 0;
}
.caret-dark {
    border-top-color: #444;
}
.caret-right {
    width: 0;
    height: 0;
    border: 4px solid transparent;
    border-left-color: #eee;
    border-right: 0;
}

/* title bar */
.header {
    display: grid;
    grid-template-columns: 38px 1fr;
    grid-template-rows: 25px 20px;
    background: #535353;
}
.app-button {
    grid-row: 1 / 3;
    height: 41px;
    display: flex;
    align-items: center;
    gap: 4px;
    padding-left: 1px;
    border: 1px solid #222;
    background: linear-gradient(#c8c8c8, #777);
}
.logo {
    width: 23px;
    height: 26px;
}
.titlebar {
    display: flex;
    background: #ececec;
    border-bottom: 1px solid #2e2e2e;
}
.quick-access, .info-center {
    display: flex;
    align-items: center;
    background: linear-gradient(#8a8a8a, #4a4a4a);
}
.quick-access {
    width: 214px;
    padding-left: 6px;
}
.quick-access button {
    width: 24px;
    height: 16px;
}
.quick-access .caret {
    margin: 0 3px;
}
.quick-access .customize {
    width: 16px;
    margin-left: 2px;
}
.quick-access .customize .caret {
    display: block;
    margin: 6px 4px 0;
    position: relative;
}
.customize .caret::before {
    content: "";
    position: absolute;
    left: -4px;
    top: -7px;
    width: 8px;
    height: 2px;
    background: #eee;
}
.window-title {
    flex: 1;
    display: flex;
    justify-content: center;
    gap: 14px;
    margin: 0;
    color: #222;
    font-size: 13px;
    font-weight: 400;
    line-height: 22px;
}
.info-center {
    width: 445px;
}
.search {
    width: 180px;
    height: 22px;
    padding: 0 4px;
    border: 1px solid #333;
    background: #666;
    color: #eee;
    font: italic 12px "Open Sans", "Noto Sans CJK SC", sans-serif;
}
.search::placeholder {
    color: #aaa;
}
.info-center button {
    display: flex;
    justify-content: center;
    width: 24px;
}
.info-center .login {
    width: 120px;
    justify-content: flex-start;
    align-items: center;
    gap: 5px;
    padding-left: 4px;
}
.info-center .login .caret {
    margin: 0 5px 0 auto;
}
.info-center .info-toggle {
    width: 14px;
}
.info-center .help {
    width: 46px;
    padding-left: 10px;
}
.window-buttons {
    display: flex;
    align-items: center;
    width: 162px;
    padding-left: 23px;
}
.window-buttons button {
    width: 46px;
    height: 12px;
    line-height: 12px;
}
.window-buttons svg, .mdi-buttons svg {
    width: 12px;
    height: 12px;
}

/* ribbon tabs */
.ribbon-tabs {
    display: flex;
    align-items: flex-end;
    padding-left: 5px;
    border-bottom: 1px solid #333;
    color: #c2c2c2;
    line-height: 20px;
}
.ribbon-tabs a {
    height: 18px;
    padding: 0 10px;
}
.ribbon-tabs a.active {
    padding: 0 8px;
    margin-right: 1px;
    color: #fff;
    background: linear-gradient(#777, #5c5c5c);
    border: 1px solid #333;
    border-bottom: 0;
    line-height: 18px;
}
.ribbon-min {
    display: flex;
    align-items: center;
    gap: 5px;
    height: 18px;
    margin-left: 25px;
}
.min-box {
    width: 13px;
    height: 8px;
    border-radius: 2px;
    background: #ddd;
    display: grid;
    place-items: center;
}
.min-box::after {
    content: "";
    border: 2px solid transparent;
    border-bottom-color: #333;
    border-top: 0;
}

/* ribbon */
.ribbon {
    display: flex;
    height: 99px;
    border-bottom: 1px solid #8c8c8c;
    background: linear-gradient(#525252, #404040);
}
.panel {
    display: flex;
    flex-direction: column;
    flex: none;
    border-right: 1px solid #454545;
    border-bottom: 1px solid #333;
    background: #5b5b5b;
}
.panel-draw { width: 209px; }
.panel-modify { width: 227px; }
.panel-annotate { width: 156px; }
.panel-layers { width: 252px; }
.panel-block { width: 134px; }
.panel-props { width: 245px; }
.panel-utils { width: 75px; }
.panel-clip { width: 77px; }
.panel-view { width: 60px; }

.panel-body {
    flex: 1;
    display: flex;
    padding-top: 5px;
}
.panel-title {
    position: relative;
    display: flex;
    align-items: center;
    justify-content: center;
    gap: 6px;
    height: 18px;
    padding: 1px 4px 0 0;
    background: linear-gradient(#4c4c4c, #545454);
}
.launch {
    position: absolute;
    right: 3px;
    bottom: 4px;
    width: 8px;
    height: 8px;
}
.big {
    display: flex;
    flex-direction: column;
    align-items: center;
    width: 41px;
    padding-top: 2px;
    line-height: 17px;
}
.big svg {
    width: 30px;
    height: 30px;
    margin-bottom: 5px;
}
.big .caret {
    margin-top: 3px;
}
.small {
    display: flex;
    align-items: center;
    gap: 5px;
    height: 24px;
}
.small .caret {
    margin-left: 5px;
}
.small-col {
    display: flex;
    flex-direction: column;
}
.panel-draw .big {
    width: 40px;
}
.panel-draw .small-col {
    margin-left: 10px;
}
.panel-draw .small-col .caret {
    margin-left: 2px;
}
.modify-grid {
    display: grid;
    grid-template-columns: 59px 59px 75px 16px;
    grid-auto-rows: 24px;
    padding-left: 7px;
}
.panel-annotate .big, .panel-utils .big, .panel-clip .big {
    width: 43px;
    margin-left: 3px;
}
.panel-annotate .big + .big {
    margin-left: 0;
}
.panel-annotate .small-col {
    margin-left: 1px;
}
.panel-utils .small-col {
    margin-left: 6px;
}
.panel-clip .big {
    margin-left: 4px;
}
.panel-clip .small-col {
    margin-left: 7px;
}
.panel-view .big {
    width: 59px;
}
.panel-block .big {
    width: 44px;
}
.panel-view .panel-title {
    justify-content: flex-start;
    padding-left: 4px;
}

/* drop-downs */
.combo {
    display: flex;
    align-items: center;
    height: 23px;
    padding: 0 3px;
    border: 1px solid #383838;
    background: linear-gradient(#545454, #6a6a6a);
}
.combo select {
    flex: 1;
    width: 0;
    padding: 0;
    border: 0;
    appearance: none;
    background: none;
    color: #eee;
    font: inherit;
}
.combo .color-select {
    padding-left: 10px;
}
.swatch {
    width: 15px;
    height: 15px;
    border: 1px solid #333;
    background: #eee;
}
.layer-tools {
    flex: 1;
    padding-right: 1px;
}
.layer-combo {
    gap: 4px;
    height: 22px;
    margin: 1px 0;
}
.layer-row {
    display: flex;
    gap: 8px;
    padding-left: 6px;
}
.prop-rows {
    flex: 1;
    display: grid;
    grid-template-columns: 16px 1fr;
    grid-auto-rows: 24px;
    align-items: center;
    column-gap: 3px;
    padding: 0 2px;
}
.prop-rows .swatch {
    width: 17px;
    height: 17px;
    margin-left: 8px;
}
.sample {
    width: 60px;
    height: 1px;
    margin: 0 2px 0 5px;
    background: #eee;
}
.sample.thick {
    height: 3px;
}

/* drawing tabs */
.doc-tabs {
    display: flex;
    align-items: flex-end;
    height: 29px;
    padding-left: 17px;
    border-bottom: 4px solid #636363;
    background: #3f3f3f;
}
.doc-tab {
    width: 127px;
    height: 22px;
    padding-left: 12px;
    line-height: 24px;
    color: #a8a8a8;
    background: linear-gradient(#575757, #484848);
    clip-path: polygon(0 100%, 5px 4px, 10px 0, 119px 0, 124px 4px, 100% 100%);
}
.doc-tab.current {
    display: flex;
    justify-content: space-between;
    width: 130px;
    margin-left: -4px;
    padding: 0 18px 0 12px;
    color: #eee;
    background: linear-gradient(#7c7c7c, #636363);
    clip-path: polygon(0 100%, 5px 4px, 10px 0, 118px 0, 124px 4px, 100% 100%);
}
.close {
    color: #444;
    font-size: 10px;
}
.doc-add {
    width: 22px;
    height: 15px;
    margin: 0 0 3px 2px;
    border-radius: 2px 8px 2px 8px;
    background: #5a5a5a;
    font-size: 16px;
    line-height: 14px;
}

/* canvas */
.canvas {
    position: relative;
    flex: 1;
    min-height: 0;
    display: flex;
    flex-direction: column;
    justify-content: flex-end;
    margin-right: 7px;
}
.drawing {
    position: absolute;
    inset: 0;
    width: 100%;
    height: 100%;
}
.tooltip {
    position: absolute;
    left: 853px;
    top: 429px;
    width: 154px;
    height: 20px;
    padding-left: 4px;
    line-height: 20px;
    color: #222;
    background: #979797;
}
.caption {
    position: absolute;
    left: 401px;
    top: 673px;
    margin: 0;
    color: #f00;
    font-family: "Noto Sans CJK SC", sans-serif;
    font-size: 27px;
    font-weight: 500;
    line-height: 40px;
}
.mdi-buttons {
    position: absolute;
    right: 10px;
    top: 9px;
    display: flex;
    gap: 8px;
}
.mdi-buttons button {
    width: 12px;
    height: 12px;
    line-height: 12px;
}
.nav-bar {
    position: absolute;
    right: 4px;
    top: 27px;
    display: flex;
    flex-direction: column;
    align-items: center;
    gap: 5px;
    width: 32px;
    height: 240px;
    padding-top: 17px;
    border-radius: 4px;
    background: #484848;
}
.nav-bar svg {
    display: block;
    width: 24px;
    height: 24px;
}
.nav-bar .caret {
    border-top-color: #2c2c2c;
}
.nav-bar hr {
    width: 30px;
    margin: 0;
    border: 0;
    border-top: 1px solid #5a5a5a;
}

/* command line */
code {
    font-family: "DejaVu Sans Mono", monospace;
    font-size: 11px;
    white-space: pre;
}
.command {
    position: relative;
    width: 1770px;
    max-width: 100%;
    font-size: 13px;
}
.history {
    display: flex;
    flex-direction: column;
    align-items: flex-start;
    gap: 5px;
    margin: 0 0 3px 57px;
    padding: 0;
    list-style: none;
}
.history li {
    padding: 0 3px;
    height: 15px;
    line-height: 15px;
    border-radius: 2px;
    background: #565656;
}
.history .old {
    color: #a0a0a0;
    background: #3c3c3c;
}
.history .mid {
    color: #ccc;
    background: #4a4a4a;
}
.command-line {
    display: flex;
    align-items: center;
    height: 26px;
    background: linear-gradient(#6a6a6a, #4a4a4a);
}
.grip {
    width: 6px;
    height: 18px;
    margin-left: 1px;
    background: repeating-linear-gradient(#999 0 1px, transparent 1px 3px);
}
.cmd-close {
    width: 22px;
    font-size: 14px;
}
.cmd-tool {
    width: 22px;
    height: 16px;
}
.prompt {
    flex: 1;
    display: flex;
    align-items: center;
    height: 26px;
    gap: 3px;
    padding: 0 4px 0 5px;
    border-radius: 2px;
    color: #222;
    background: #ececec;
}
.prompt > span {
    margin-left: 4px;
}
.cmd-up {
    margin-left: auto;
    border: 4px solid transparent;
    border-bottom-color: #222;
    border-top: 0;
}

/* status bar */
.status {
    position: relative;
    display: flex;
    justify-content: space-between;
    height: 27px;
    background: #404040;
}
.layout-tabs {
    display: flex;
    align-items: flex-start;
    padding: 1px 0 0 6px;
    color: #aaa;
    line-height: 20px;
}
.layout-tabs a {
    width: 54px;
    height: 18px;
    padding-left: 10px;
    background: #565656;
    clip-path: polygon(0 0, 100% 0, 46px 100%, 8px 100%);
}
.layout-tabs a.current {
    width: 51px;
    padding-left: 14px;
    color: #fff;
    font-weight: 700;
    background: #808080;
}
.layout-tabs button {
    width: 22px;
    height: 16px;
    margin-left: 4px;
    border-radius: 2px 2px 8px 8px;
    background: #565656;
    font-size: 16px;
    line-height: 16px;
}
.status-tools {
    display: flex;
    gap: 1px;
    padding-top: 1px;
    background: #777;
}
.cell {
    display: flex;
    align-items: center;
    border: 1px solid #888;
    border-width: 1px 0 1px 1px;
    background: #535353;
}
.cell:nth-child(even) {
    margin-left: 1px;
}
.cell button {
    display: flex;
    justify-content: center;
    width: 24px;
    color: #bbb;
}
.cell button.on {
    color: #2f8af0;
}
.cell .caret {
    margin: 0 3px;
}
.cell .model {
    width: 28px;
    color: #fff;
}
.vars {
    padding: 0 10px 0 7px;
}
.scale {
    padding: 0 2px;
}

/* input method bar */
.ime {
    position: absolute;
    left: 690px;
    top: -2px;
    display: flex;
    align-items: center;
    gap: 6px;
    width: 209px;
    height: 28px;
    border: 4px solid #101010;
    border-width: 4px 2px 2px;
    background: #ececec;
    color: #3079bd;
}
.ime b {
    width: 16px;
    font-size: 15px;
    text-align: center;
}
.ime-logo {
    width: 27px;
    height: 26px;
    margin-top: -2px;
}

/* floating group palette */
.palette {
    position: absolute;
    left: 1px;
    top: 183px;
    display: flex;
    width: 77px;
    height: 96px;
    background: #4e4e4e;
}
.palette-main {
    display: flex;
    flex-direction: column;
    width: 64px;
    background: #5b5b5b;
}
.palette-body {
    flex: 1;
    display: flex;
    padding-top: 4px;
}
.palette .big {
    width: 36px;
    padding-top: 8px;
}
.palette .big svg {
    width: 32px;
    height: 32px;
}
.palette .small-col {
    margin-left: 2px;
}
.palette .small {
    justify-content: center;
    width: 24px;
}
.palette .pressed {
    height: 22px;
    margin: 1px 0;
    border: 1px solid #2c3e60;
    background: #6583b4;
}
.palette-side {
    display: flex;
    align-items: center;
    padding-left: 3px;
}

/* strip of the desktop behind the window */
.desktop-edge {
    position: absolute;
    right: 2px;
    top: 191px;
    bottom: 46px;
    width: 6px;
    background: linear-gradient(#a8d2e6 0 10%, #9cc8dd);
}
.desktop-edge::before {
    content: "";
    position: absolute;
    top: -126px;
    width: 6px;
    height: 107px;
    background: #2c3755;
}

.watermark {
    position: absolute;
    right: 18px;
    top: 17px;
    display: flex;
    align-items: center;
    pointer-events: none;
}
.watermark svg {
    width: 68px;
    height: 52px;
    margin-right: 2px;
}
.watermark span {
    color: transparent;
    font-family: "Noto Sans CJK SC", sans-serif;
    font-size: 46px;
    line-height: 50px;
    -webkit-text-stroke: 1px rgba(168, 168, 168, 0.9);
}
```
